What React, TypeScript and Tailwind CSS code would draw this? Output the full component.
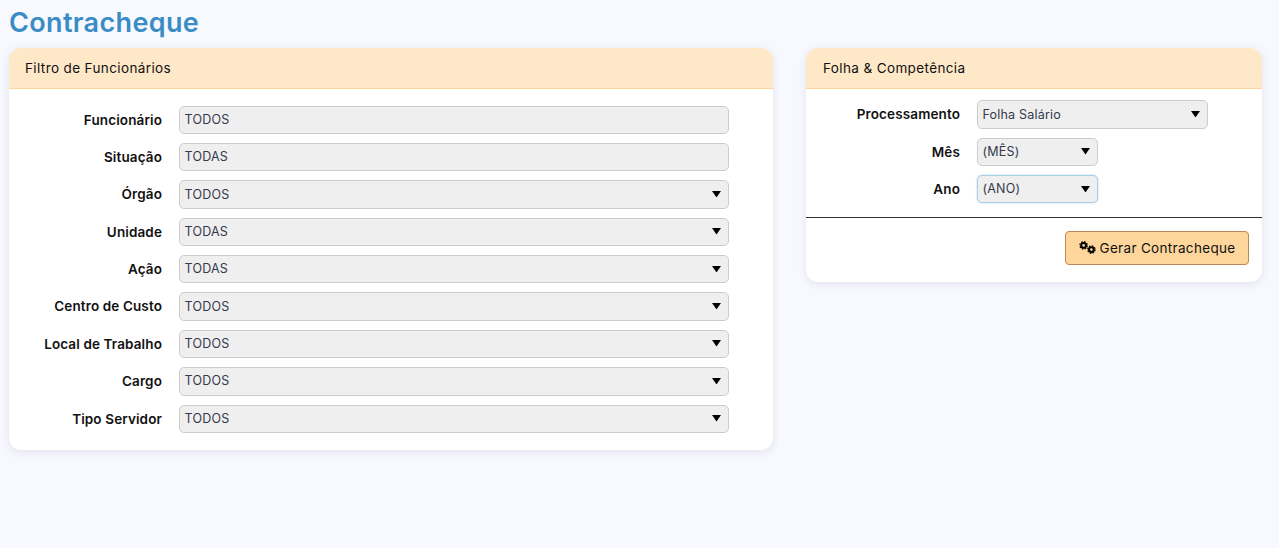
import React from 'react';

const font = "font-['Inter','Liberation_Sans',sans-serif]";

const Arrow: React.FC = () => (
  <svg className="pointer-events-none absolute top-[9.5px] right-[7px]" width="9" height="6.5" viewBox="0 0 10 7">
    <path d="M0 0h10L5 7z" fill="#000" />
  </svg>
);

const GearsIcon: React.FC = () => (
  <svg width="17" height="13" viewBox="0 0 17 13" fill="none" stroke="#000">
    <circle cx="4.6" cy="4.4" r="2.4" strokeWidth="2" />
    <circle cx="4.6" cy="4.4" r="3.7" strokeWidth="1.2" strokeDasharray="1.6 1.3" />
    <circle cx="12.4" cy="8.6" r="2.4" strokeWidth="2" />
    <circle cx="12.4" cy="8.6" r="3.7" strokeWidth="1.2" strokeDasharray="1.6 1.3" />
  </svg>
);

interface FieldProps {
  value: string;
  arrow?: boolean;
  focused?: boolean;
  width: string;
}

const Field: React.FC<FieldProps> = ({ value, arrow = true, focused = false, width }) => (
  <div
    className={`relative flex h-[28.375px] items-center rounded-[5px] border bg-[#efefef] pt-[1px] pl-[4.5px] text-[12.5px] tracking-[0.2px] text-[#343a4d] ${width} ${
      focused ? 'border-[#a9cfe4] shadow-[0_0_2px_#a9cfe4]' : 'border-[#cccccc]'
    }`}
  >
    {value}
    {arrow && <Arrow />}
  </div>
);

const filtros = [
  { label: 'Funcionário', value: 'TODOS', arrow: false },
  { label: 'Situação', value: 'TODAS', arrow: false },
  { label: 'Órgão', value: 'TODOS', arrow: true },
  { label: 'Unidade', value: 'TODAS', arrow: true },
  { label: 'Ação', value: 'TODAS', arrow: true },
  { label: 'Centro de Custo', value: 'TODOS', arrow: true },
  { label: 'Local de Trabalho', value: 'TODOS', arrow: true },
  { label: 'Cargo', value: 'TODOS', arrow: true },
  { label: 'Tipo Servidor', value: 'TODOS', arrow: true },
];

const folha = [
  { label: 'Processamento', value: 'Folha Salário', width: 'w-[231px]', focused: false },
  { label: 'Mês', value: '(MÊS)', width: 'w-[121px]', focused: false },
  { label: 'Ano', value: '(ANO)', width: 'w-[121px]', focused: true },
];

const CardHeader: React.FC<{ title: string; pad: string }> = ({ title, pad }) => (
  <div className={`flex h-[41px] items-center border-b border-[#fdd59b] bg-[#fee8c8] text-[13.5px] tracking-[0.38px] text-[#111] ${pad}`}>
    {title}
  </div>
);

export default function App() {
  return (
    <div className={`min-h-[548px] bg-[#f8f9ff] pl-[9px] ${font}`}>
      <h1 className="flex h-[48px] items-center pb-[1px] text-[27px] font-semibold tracking-[0.35px] text-[#3a8dc4]">Contracheque</h1>
      <div className="flex items-start">
        <div className="w-[764px] overflow-hidden rounded-xl bg-white shadow-[0_2px_8px_rgba(60,60,100,0.12)]">
          <CardHeader title="Filtro de Funcionários" pad="pl-[16px]" />
          <div className="flex flex-col gap-[9px] pt-[16.55px] pb-[17.45px]">
            {filtros.map((f) => (
              <div key={f.label} className="flex items-center">
                <label className="w-[153px] text-right text-[13.5px] font-semibold tracking-[0.12px] text-[#111]">{f.label}</label>
                <div className="ml-[17px]">
                  <Field value={f.value} arrow={f.arrow} width="w-[550px]" />
                </div>
              </div>
            ))}
          </div>
        </div>

        <div className="ml-[33px] w-[456px] overflow-hidden rounded-xl bg-white shadow-[0_2px_8px_rgba(60,60,100,0.12)]">
          <CardHeader title="Folha & Competência" pad="pl-[17px]" />
          <div className="flex flex-col gap-[9px] pt-[11.3px] pb-[13.5px]">
            {folha.map((f) => (
              <div key={f.label} className="flex items-center">
                <label className="w-[154px] text-right text-[13.5px] font-semibold tracking-[0.12px] text-[#111]">{f.label}</label>
                <div className="ml-[17px]">
                  <Field value={f.value} width={f.width} focused={f.focused} />
                </div>
              </div>
            ))}
          </div>
          <div className="border-t border-[#333]" />
          <div className="flex justify-end pt-[13px] pr-[13px] pb-[17px]">
            <button
              type="button"
              className="flex h-[34px] w-[184px] items-center justify-center gap-[4px] rounded-[4px] border border-[#b98a55] bg-[#fed69b] text-[13.5px] tracking-[0.32px] text-[#111]"
            >
              <GearsIcon />
              Gerar Contracheque
            </button>
          </div>
        </div>
      </div>
    </div>
  );
}
